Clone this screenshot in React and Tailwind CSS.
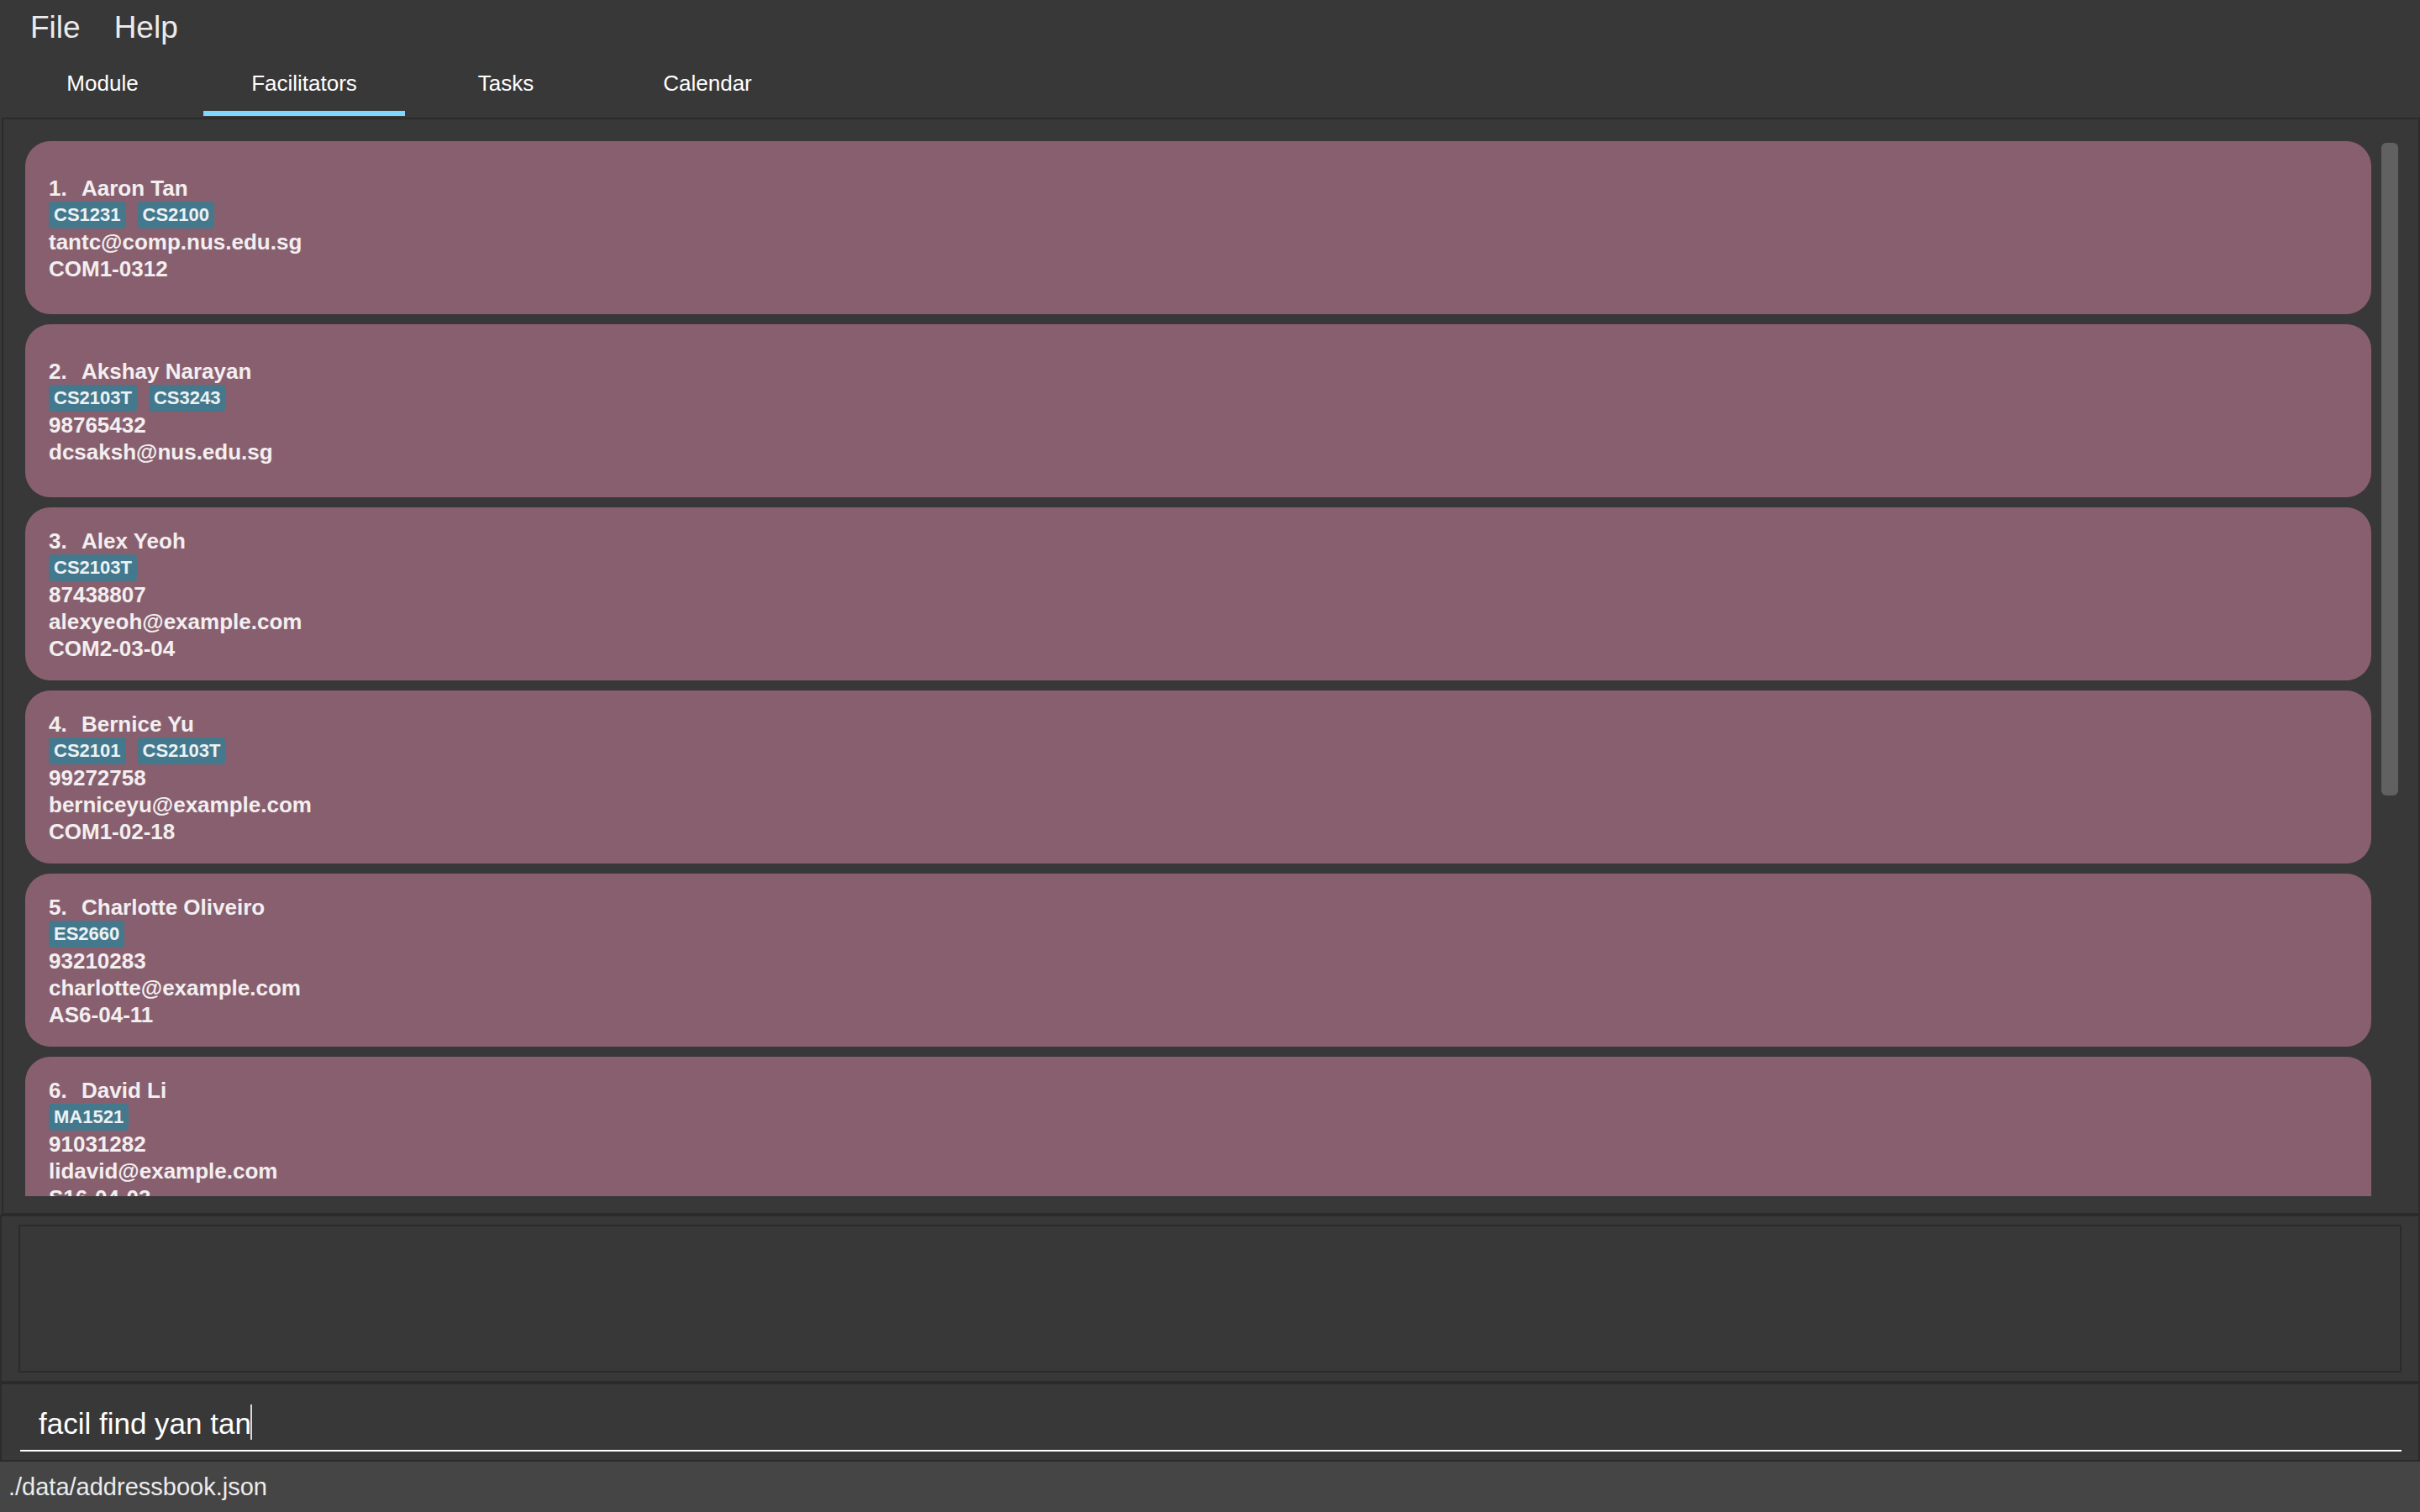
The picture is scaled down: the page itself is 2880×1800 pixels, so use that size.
const MENUS = ["File", "Help"];

const TABS = ["Module", "Facilitators", "Tasks", "Calendar"];

const FACILITATORS = [
  { name: "Aaron Tan", modules: ["CS1231", "CS2100"], details: ["tantc@comp.nus.edu.sg", "COM1-0312"] },
  { name: "Akshay Narayan", modules: ["CS2103T", "CS3243"], details: ["98765432", "dcsaksh@nus.edu.sg"] },
  { name: "Alex Yeoh", modules: ["CS2103T"], details: ["87438807", "alexyeoh@example.com", "COM2-03-04"] },
  { name: "Bernice Yu", modules: ["CS2101", "CS2103T"], details: ["99272758", "berniceyu@example.com", "COM1-02-18"] },
  { name: "Charlotte Oliveiro", modules: ["ES2660"], details: ["93210283", "charlotte@example.com", "AS6-04-11"] },
  { name: "David Li", modules: ["MA1521"], details: ["91031282", "lidavid@example.com", "S16-04-03"] },
];

function MenuBar() {
  return (
    <nav className="flex h-[66px] shrink-0 items-center gap-10 px-9 text-[37px] leading-[44px] text-white/90">
      {MENUS.map((menu) => (
        <button key={menu} type="button">
          {menu}
        </button>
      ))}
    </nav>
  );
}

function TabBar({ selected }) {
  return (
    <div role="tablist" className="flex h-[72px] shrink-0 px-0.5 text-[26px] leading-8 text-white">
      {TABS.map((tab) => (
        <button
          key={tab}
          type="button"
          role="tab"
          aria-selected={tab === selected}
          className={
            tab === selected
              ? "w-60 border-b-6 border-[#80d8ff]"
              : "w-60 border-b-6 border-transparent"
          }
        >
          {tab}
        </button>
      ))}
    </div>
  );
}

function FacilitatorCard({ index, name, modules, details }) {
  return (
    <li className="flex h-[206px] shrink-0 flex-col justify-center rounded-[30px] bg-[#885f6e] px-7 pt-0.5 text-[26px] leading-8 font-bold text-white/90">
      <div className="flex">
        <span className="w-[39px]">{index}.</span>
        <span>{name}</span>
      </div>
      <div className="flex gap-3.5">
        {modules.map((code) => (
          <span key={code} className="rounded-sm bg-[#44788d] px-1.5 text-[22px] leading-8">
            {code}
          </span>
        ))}
      </div>
      {details.map((line) => (
        <p key={line}>{line}</p>
      ))}
    </li>
  );
}

export default function App() {
  const command = "facil find yan tan";
  return (
    <div className="flex h-screen flex-col overflow-hidden bg-[#383838] font-['Liberation_Sans',Arial,sans-serif]">
      <MenuBar />
      <TabBar selected="Facilitators" />

      <main className="mt-0.5 ml-0.5 flex min-h-0 flex-1 gap-3 border-2 border-[#2b2b2b] pt-[26px] pr-6 pb-5 pl-[26px]">
        <ul className="flex min-h-0 flex-1 flex-col gap-3 overflow-hidden">
          {FACILITATORS.map((person, i) => (
            <FacilitatorCard key={person.name} index={i + 1} {...person} />
          ))}
        </ul>
        <div className="w-5 pt-0.5">
          <div className="h-[62%] rounded-md bg-[#616161]" />
        </div>
      </main>

      <section className="shrink-0 border-2 border-[#2b2b2b] px-5 py-2.5">
        <textarea
          aria-label="Result"
          readOnly
          className="block h-44 w-full resize-none border-2 border-[#2b2b2b] bg-transparent px-4 py-2 text-[26px] text-white outline-none"
        />
      </section>

      <form className="shrink-0 border-2 border-[#2b2b2b] pt-[18px] pr-5 pb-2.5 pl-[22px]">
        <div className="relative border-b-2 border-white pb-0.5">
          <input
            type="text"
            aria-label="Command"
            defaultValue={command}
            className="block h-[58px] w-full bg-transparent px-[22px] text-[35px] text-white outline-none"
          />
          {/* Caret placed after the typed command */}
          <div aria-hidden="true" className="pointer-events-none absolute inset-x-0 top-1.5 flex h-[42px] pl-[274px]">
            <span className="w-0.5 bg-white/80" />
          </div>
        </div>
      </form>

      <footer className="flex h-[60px] shrink-0 items-center bg-[#454545] px-2.5 text-[29px] leading-9 text-white/90">
        ./data/addressbook.json
      </footer>
    </div>
  );
}
